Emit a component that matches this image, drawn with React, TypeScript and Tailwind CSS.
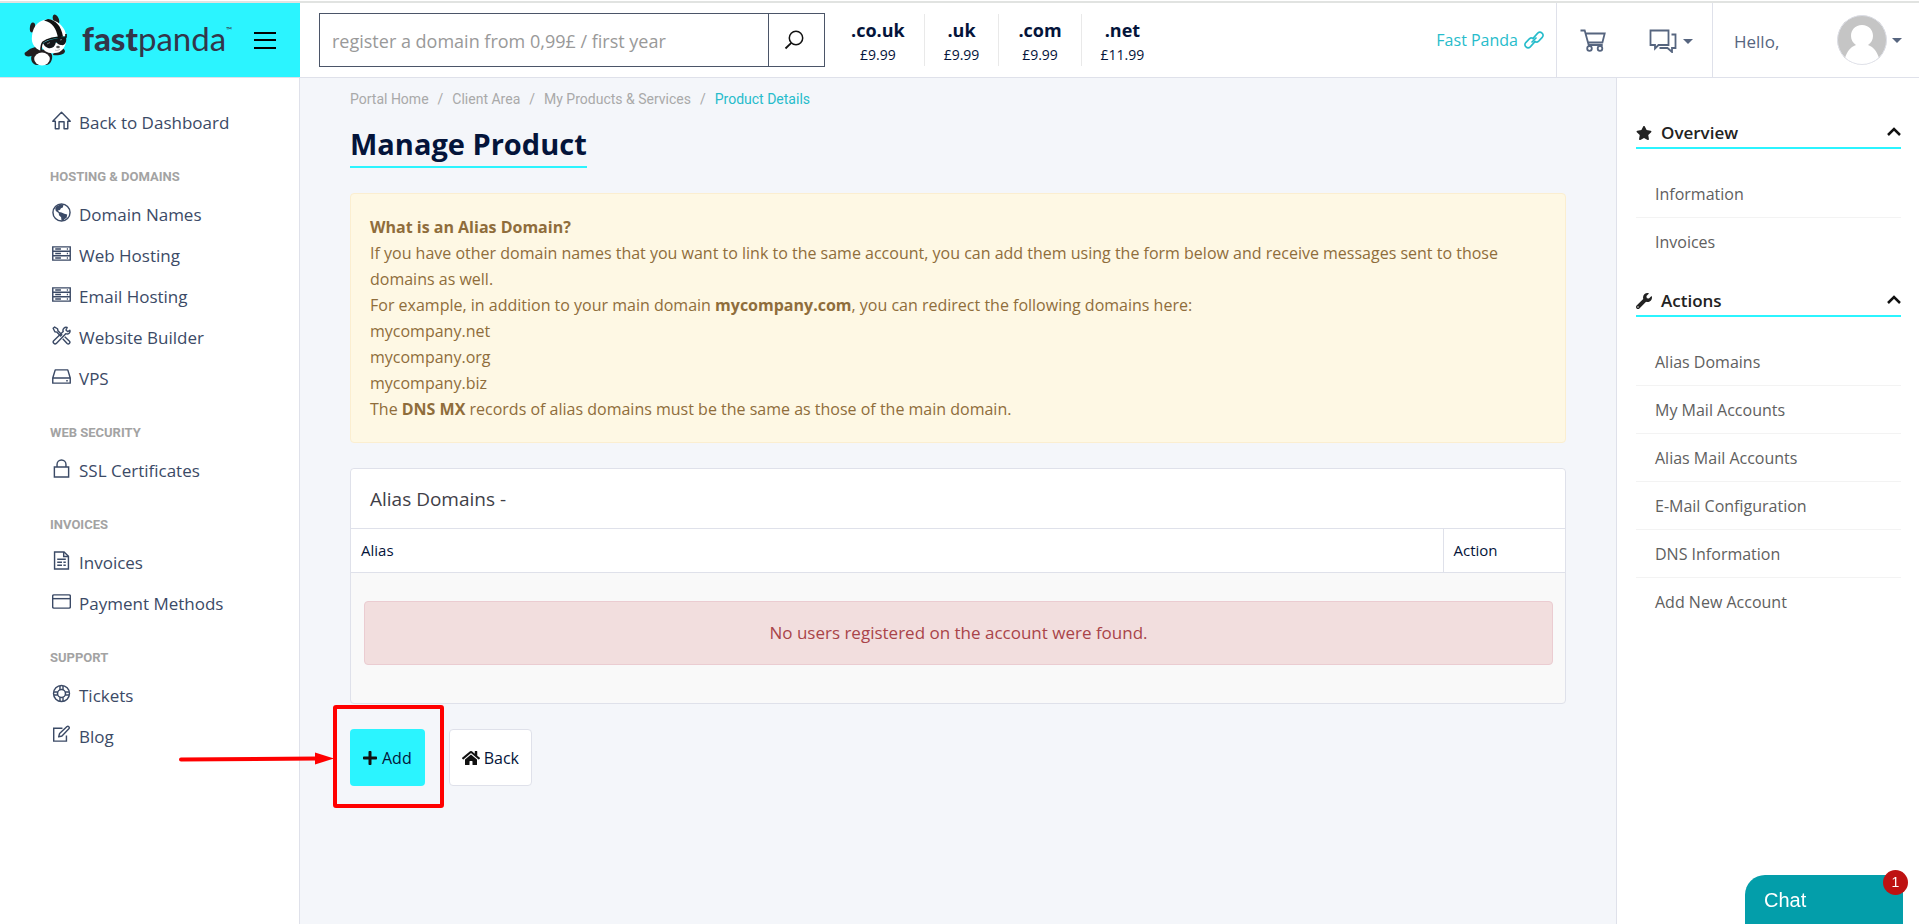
import type { ReactNode } from 'react';
import { FaHome, FaPlus, FaStar, FaWrench } from 'react-icons/fa';

type NavItem = { title: string; icon: ReactNode };
type NavGroup = { title?: string; items: NavItem[] };

function LineIcon({ children }: { children: ReactNode }) {
    return (
        <svg
            viewBox="0 0 20 20"
            className="mb-1 h-[19px] w-[19px] shrink-0"
            fill="none"
            stroke="currentColor"
            strokeWidth="1.5"
            aria-hidden="true"
        >
            {children}
        </svg>
    );
}

function ServerIcon() {
    return (
        <LineIcon>
            <path d="M.8 3h18.4v14H.8zM.8 7.6h18.4M.8 12.3h18.4" />
            <path d="M3.4 5.3h6M3.4 10h6M3.4 14.7h6M15.6 5.3h1.2M15.6 10h1.2M15.6 14.7h1.2" strokeWidth="1.6" />
        </LineIcon>
    );
}

const groups: NavGroup[] = [
    {
        items: [
            {
                title: 'Back to Dashboard',
                icon: (
                    <LineIcon>
                        <path d="M.8 10.8 10 1.3l9.2 9.5h-2.6v7.8h-3.9v-7.3H7.4v7.3H3.5v-7.8z" strokeLinejoin="round" />
                    </LineIcon>
                ),
            },
        ],
    },
    {
        title: 'Hosting & Domains',
        items: [
            {
                title: 'Domain Names',
                icon: (
                    <LineIcon>
                        <circle cx="10" cy="10" r="9" />
                        <path
                            d="M4.5 3.6 9 1.4l3 .8-.6 2.6-2 .6-1 2-2.2.6 1.4 1.6 2.4.4 3 1.2 3 1-.6 3.4-2.4 1.4-1.2 2-1.8-.6-.4-3.4-2.2-2L7 10.6 4 8.4 3.4 5.8z"
                            fill="currentColor"
                            stroke="none"
                        />
                    </LineIcon>
                ),
            },
            { title: 'Web Hosting', icon: <ServerIcon /> },
            { title: 'Email Hosting', icon: <ServerIcon /> },
            {
                title: 'Website Builder',
                icon: (
                    <LineIcon>
                        <path d="m1.2 2.4 1.6-1.3 3 1.8.5 2.2 4 4-1.3 1.3-4-4-2-.4z" strokeLinejoin="round" />
                        <path
                            d="m18.8 4.5-2.4 1.3-1.7-1.6L16 1.6c-2.6-.9-5.3 1.4-4.2 4.2l-10 9.8c-1.6 1.8 1 4.3 2.7 2.7l10-10.2c2.8 1 5.2-1.2 4.3-3.6z"
                            strokeLinejoin="round"
                        />
                        <path d="m13.4 11.4 5 4.6c1.4 1.6-.9 3.8-2.5 2.4l-4.6-5" />
                    </LineIcon>
                ),
            },
            {
                title: 'VPS',
                icon: (
                    <LineIcon>
                        <path d="M3.4 3h13.2l2.6 8.6V17H.8v-5.4zM.8 11.6h18.4M15 14.4h1.6" strokeLinejoin="round" />
                    </LineIcon>
                ),
            },
        ],
    },
    {
        title: 'Web Security',
        items: [
            {
                title: 'SSL Certificates',
                icon: (
                    <LineIcon>
                        <path d="M2.5 8.5h15V19h-15zM5.3 8.5V5.7a4.7 4.7 0 0 1 9.4 0v2.8" />
                    </LineIcon>
                ),
            },
        ],
    },
    {
        title: 'Invoices',
        items: [
            {
                title: 'Invoices',
                icon: (
                    <LineIcon>
                        <path d="M2.7 1h10l4.6 4.5V19H2.7z" />
                        <path d="M12.3 1v4.7h5" />
                        <path d="M5.5 8.6h9M5.5 11.8h5M12 11.8h2.5M5.5 15h5M12 15h2.5" />
                    </LineIcon>
                ),
            },
            {
                title: 'Payment Methods',
                icon: (
                    <LineIcon>
                        <rect x=".7" y="3" width="18.6" height="14" rx="1.4" />
                        <path d="M.7 7h18.6" />
                    </LineIcon>
                ),
            },
        ],
    },
    {
        title: 'Support',
        items: [
            {
                title: 'Tickets',
                icon: (
                    <LineIcon>
                        <circle cx="10" cy="10" r="8.4" />
                        <circle cx="10" cy="10" r="4.2" strokeWidth="1.6" />
                        <path d="M8.4 2v4M11.6 2v4M8.4 14v4M11.6 14v4M2 8.4h4M2 11.6h4M14 8.4h4M14 11.6h4" />
                    </LineIcon>
                ),
            },
            {
                title: 'Blog',
                icon: (
                    <LineIcon>
                        <path d="M11 3.5H1.8V17h13.4v-6" />
                        <path d="m7 12.5 1-3.500 7.800-7.400c1.400-.8 3 .8 2.200 2.200L10.500 11.600z" strokeLinejoin="round" />
                    </LineIcon>
                ),
            },
        ],
    },
];

const prices = [
    { tld: '.co.uk', price: '£9.99' },
    { tld: '.uk', price: '£9.99' },
    { tld: '.com', price: '£9.99' },
    { tld: '.net', price: '£11.99' },
];

const crumbs = ['Portal Home', 'Client Area', 'My Products & Services'];

const panels = [
    { title: 'Overview', icon: <FaStar className="h-4 w-4" />, links: ['Information', 'Invoices'] },
    {
        title: 'Actions',
        icon: <FaWrench className="h-4 w-4" />,
        links: ['Alias Domains', 'My Mail Accounts', 'Alias Mail Accounts', 'E-Mail Configuration', 'DNS Information', 'Add New Account'],
    },
];

function Panda() {
    return (
        <svg viewBox="0 0 44 52" className="h-[52px] w-11 shrink-0" aria-hidden="true">
            <ellipse cx="8.5" cy="13.5" rx="2.6" ry="5" fill="#231f20" transform="rotate(8 8.5 13.5)" />
            <ellipse cx="32" cy="5.5" rx="2.8" ry="5.2" fill="#231f20" transform="rotate(-24 32 5.5)" />
            <path d="M18 33C12 31 3 36 .5 39.5c0 4 7 4 11 0z" fill="#231f20" />
            <path d="M30 37c4-4 10-4 11 0 0 4-8 5-12 4z" fill="#231f20" />
            <path d="M9 39c3-5 17-5 19 2 1 5-2 10-6 10H13c-5 0-8-7-4-12z" fill="#231f20" />
            <ellipse cx="18" cy="45" rx="7.8" ry="6.5" fill="#fff" />
            <path d="M17 30c2 8 8 10 14 9 6 0 10-5 11-11z" fill="#fff" />
            <path d="M8 22C9 9 19 4 28 6c8 2 14 9 14 16l-11 1-13 6-1 8C10 34 7 29 8 22z" fill="#fff" />
            <path d="M20 6.5c9 2 12 8 14 17l5-1C37 12 32 6 24 5z" fill="#111" />
            <path d="M42 20v3c-8 0-18 1-23 5-2 2-2 5-2 9" fill="none" stroke="#111" strokeWidth="1.6" />
            <path d="M19 29c7-4 15-5 23-6 1 5-1 9-5 8-2 0-4-2-5-3-1 5-4 7-8 6-3-1-4-3-5-5z" fill="#15171a" />
            <path d="m23 30 3-1.5M36 26l2-.5" stroke="#777" strokeWidth="1" />
            <ellipse cx="34" cy="33" rx="1.8" ry="1.2" fill="#555" />
            <path d="M31 36c2 1 4 0 5-1" fill="none" stroke="#999" strokeWidth=".6" />
        </svg>
    );
}

function Caret() {
    return (
        <svg viewBox="0 0 10 5" className="h-[5px] w-2.5" fill="#56657f" aria-hidden="true">
            <path d="M0 0h10L5 5z" />
        </svg>
    );
}

function Header() {
    return (
        <header className="flex h-[75px] border-b border-[#dfe1ea] bg-white">
            <div className="flex w-[300px] shrink-0 items-center bg-[#2bf4ff] pl-6">
                <a href="#" className="flex items-center text-[#33364a]">
                    <Panda />
                    <span className="ml-3.5 pb-1 font-[Lato] text-[33px] leading-9">
                        <b className="font-black">fast</b>panda
                    </span>
                    <span className="self-start pt-2 font-[Lato] text-[8px] leading-4">™</span>
                </a>
                <button type="button" aria-label="Menu" className="mr-6 ml-auto flex h-[17px] w-[22px] flex-col justify-between">
                    <span className="h-0.5 w-full bg-black" />
                    <span className="h-0.5 w-full bg-black" />
                    <span className="h-0.5 w-full bg-black" />
                </button>
            </div>

            <form className="my-auto ml-[19px] flex h-[54px] w-[506px] border border-[#4b5568]">
                <input
                    type="text"
                    aria-label="Domain"
                    placeholder="register a domain from 0,99£ / first year"
                    className="min-w-0 flex-1 px-3 pt-0.5 text-[18px] outline-none placeholder:text-[#999]"
                />
                <button type="button" aria-label="Search" className="flex w-14 items-center justify-center border-l border-[#4b5568]">
                    <svg viewBox="0 0 20 20" className="mr-1.5 h-5 w-5" fill="none" stroke="#111" strokeWidth="1.5" aria-hidden="true">
                        <circle cx="12" cy="8" r="6.7" />
                        <path d="M7.3 12.8 1.5 18.5" strokeWidth="1.8" />
                    </svg>
                </button>
            </form>

            <ul className="my-auto ml-[7px] flex divide-x divide-[#e9e9e9] text-center text-[#04143a]">
                {prices.map((item) => (
                    <li key={item.tld} className="h-[52px] px-[19px]">
                        <div className="pt-1 text-[18px] leading-6 font-bold">{item.tld}</div>
                        <div className="pt-px text-[14px] leading-6">{item.price}</div>
                    </li>
                ))}
            </ul>

            <div className="ml-auto flex items-center text-[#56657f]">
                <a href="#" className="flex h-full items-center gap-1.5 pr-3 text-[16px] text-[#27bccb]">
                    Fast Panda
                    <svg viewBox="0 0 20 20" className="h-5 w-5" fill="none" stroke="currentColor" strokeWidth="1.6" aria-hidden="true">
                        <path d="m8.4 9.1 5.3-6c3-2.700 7 1.300 4.500 4.300l-3.500 3.700c-1.500 1.400-3.600 1.200-4.700 0" />
                        <path d="m11.600 10.900-5.300 6c-3 2.700-7-1.300-4.500-4.300l3.500-3.700c1.500-1.400 3.600-1.200 4.700 0" />
                        <path d="m7.500 12.500 5-5" />
                    </svg>
                </a>
                <div className="flex h-full items-center border-x border-[#dfe1ea] pt-0.5 pr-[19px] pl-[23px]">
                    <button type="button" aria-label="Cart">
                        <svg viewBox="0 0 26 24" className="h-6 w-[26px]" fill="none" stroke="currentColor" strokeWidth="1.8" aria-hidden="true">
                            <path d="M.5 1.500h4.200l4 14.500h14M5.700 4.500h19l-2.300 9H8" />
                            <circle cx="9.500" cy="19.500" r="2.300" />
                            <circle cx="20" cy="19.500" r="2.300" />
                        </svg>
                    </button>
                    <button type="button" aria-label="Messages" className="ml-[43px] flex items-center gap-1.5">
                        <svg viewBox="0 0 28 24" className="h-6 w-7" fill="none" stroke="currentColor" strokeWidth="1.8" aria-hidden="true">
                            <path d="M1.500 1.500h18v14.500h-10L6 19.500V16H1.500z" />
                            <path d="M22.500 5.500h4v13.500h-3.500v4L18.500 19h-8" />
                        </svg>
                        <Caret />
                    </button>
                </div>
                <button type="button" className="flex items-center pr-[17px] pl-[21px]">
                    <span className="w-[103px] pt-1 text-left text-[17px]">Hello,</span>
                    <svg viewBox="0 0 50 50" className="mr-[5px] h-[50px] w-[50px] rounded-full" aria-hidden="true">
                        <circle cx="25" cy="25" r="25" fill="#c5c5c5" />
                        <path
                            d="M25 10c7 0 11 5 11 11 0 4-2 7-5 9 6 2 9 7 11 13-9 9-25 9-34 0 2-6 5-11 11-13-3-2-5-5-5-9 0-6 4-11 11-11z"
                            fill="#fff"
                        />
                        <circle cx="25" cy="25" r="24.5" fill="none" stroke="#dfe1ea" />
                    </svg>
                    <Caret />
                </button>
            </div>
        </header>
    );
}

function Sidebar() {
    return (
        <aside className="w-[300px] shrink-0 border-r border-[#dfe1ea] bg-white pt-6 pl-[50px] text-[#3b4a66]">
            {groups.map((group, i) => (
                <nav key={i} aria-label={group.title}>
                    {group.title && (
                        <h2 className="pt-[26px] pb-[9px] font-[Roboto] text-[13px] leading-4 font-bold text-[#a3a3a3] uppercase">{group.title}</h2>
                    )}
                    {group.items.map((item) => (
                        <a key={item.title} href="#" className="flex h-[41px] items-center gap-2 pl-0.5 text-[17px]">
                            {item.icon}
                            {item.title}
                        </a>
                    ))}
                </nav>
            ))}
        </aside>
    );
}

function AliasInfo() {
    return (
        <div className="mt-[25px] rounded border border-[#fbeed0] bg-[#fef8e4] px-[19px] py-5 text-[16px] leading-[26px] text-[#8f6d3b]">
            <strong>What is an Alias Domain?</strong>
            <p>
                If you have other domain names that you want to link to the same account, you can add them using the form below and receive messages
                sent to those domains as well.
            </p>
            <p>
                For example, in addition to your main domain <strong>mycompany.com</strong>, you can redirect the following domains here:
            </p>
            <p>mycompany.net</p>
            <p>mycompany.org</p>
            <p>mycompany.biz</p>
            <p>
                The <strong>DNS MX</strong> records of alias domains must be the same as those of the main domain.
            </p>
        </div>
    );
}

export default function App() {
    return (
        <div className="flex min-h-screen flex-col bg-white pt-px font-['Open_Sans','Noto_Sans',sans-serif]">
            <div className="h-0.5 bg-[#e1e3e1]" />
            <Header />

            <div className="flex flex-1">
                <Sidebar />

                <main className="min-w-0 flex-1 bg-[#f4f6fa] px-[50px] pt-[11px]">
                    <nav aria-label="Breadcrumb" className="flex gap-[9px] font-[Roboto] text-[14px] leading-5 text-[#a9a9a9]">
                        {crumbs.map((crumb) => (
                            <span key={crumb} className="flex gap-[9px]">
                                <a href="#">{crumb}</a>
                                <span>/</span>
                            </span>
                        ))}
                        <span className="text-[#27bccb]">Product Details</span>
                    </nav>

                    <h1 className="mt-[17px] w-fit border-b-2 border-[#2bf4ff] pb-1 text-[29px] leading-9 font-bold text-[#04143a]">
                        Manage Product
                    </h1>

                    <AliasInfo />

                    <section className="mt-[25px] rounded border border-[#dfe1ea] bg-[#f9f9f9]">
                        <h2 className="rounded-t bg-white px-[19px] pt-4 pb-[15px] text-[19px] leading-7 text-[#3f4047]">Alias Domains -</h2>
                        <table className="w-full table-fixed text-left">
                            <thead className="border-y border-[#dfe1ea] bg-white text-[15px] leading-6 text-[#04143a]">
                                <tr>
                                    <th className="px-2.5 pt-[9px] pb-2.5 font-normal">Alias</th>
                                    <th className="w-[122px] border-l border-[#dfe1ea] px-2.5 pt-[9px] pb-2.5 font-normal">Action</th>
                                </tr>
                            </thead>
                            <tbody>
                                <tr>
                                    <td colSpan={2} className="pt-7 pr-3 pb-[38px] pl-[13px]">
                                        <div className="rounded border border-[#ebccd1] bg-[#f2dede] py-[18px] text-center text-[17px] leading-[26px] text-[#a94449]">
                                            No users registered on the account were found.
                                        </div>
                                    </td>
                                </tr>
                            </tbody>
                        </table>
                    </section>

                    <div className="relative mt-[25px] mb-10 flex w-fit gap-6 text-[16px] text-[#04143a]">
                        <button type="button" className="flex h-[57px] items-center gap-1 rounded bg-[#2bf4ff] pr-[13px] pl-3">
                            <FaPlus className="h-4 w-4 text-[#111]" /> Add
                        </button>
                        <button type="button" className="flex h-[57px] items-center gap-1 rounded border border-[#dfe1ea] bg-white px-3">
                            <FaHome className="h-[18px] w-[18px] text-[#111]" /> Back
                        </button>

                        {/* Highlight around the Add button, with its arrow */}
                        <svg
                            viewBox="0 0 266 104"
                            className="pointer-events-none absolute -top-6 -left-[171px] h-[104px] w-[266px]"
                            fill="none"
                            aria-hidden="true"
                        >
                            <rect x="156" y="2" width="107" height="99" rx="1" stroke="#ff0000" strokeWidth="4" />
                            <path d="M2 54.5 138 53.5" stroke="#ff0000" strokeWidth="4" strokeLinecap="round" />
                            <path d="M136 47.5 155 53.5 136 59.5z" fill="#ff0000" />
                        </svg>
                    </div>
                </main>

                <aside className="w-[303px] shrink-0 border-l border-[#dfe1ea] bg-white pt-[41px] pr-[18px] pl-[19px]">
                    {panels.map((panel) => (
                        <section key={panel.title} className="mb-[22px]">
                            <h2 className="flex items-center gap-[9px] border-b-2 border-[#2bf4ff] text-[17px] leading-7 font-semibold text-[#222]">
                                {panel.icon}
                                {panel.title}
                                <svg
                                    viewBox="0 0 14 9"
                                    className="mb-1 ml-auto h-[9px] w-3.5"
                                    fill="none"
                                    stroke="#111"
                                    strokeWidth="2.5"
                                    aria-hidden="true"
                                >
                                    <path d="m1 8 6-6 6 6" />
                                </svg>
                            </h2>
                            <ul className="mt-[21px] divide-y divide-[#f3f3f3] text-[16px] text-[#606060]">
                                {panel.links.map((link) => (
                                    <li key={link}>
                                        <a href="#" className="block px-[19px] pt-3 pb-[11px] leading-6">
                                            {link}
                                        </a>
                                    </li>
                                ))}
                            </ul>
                        </section>
                    ))}
                </aside>
            </div>

            <button
                type="button"
                className="fixed right-4 bottom-0 h-[49px] w-[158px] rounded-tl-[20px] bg-[#039eaa] px-[19px] text-left font-['Liberation_Sans',sans-serif] text-[20px] text-white"
            >
                Chat
                <span className="absolute -top-[5px] -right-[5px] flex h-[25px] w-[25px] items-center justify-center rounded-full bg-[#be1212] text-[14px]">
                    1
                </span>
            </button>
        </div>
    );
}
